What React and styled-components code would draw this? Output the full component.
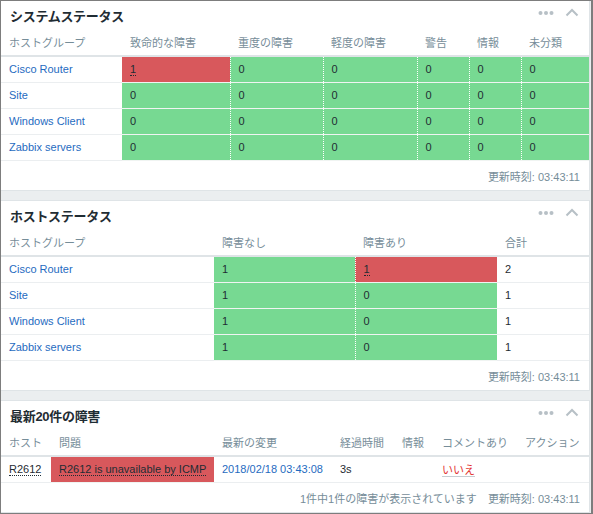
import styled, { createGlobalStyle } from "styled-components";

const GlobalStyle = createGlobalStyle`
  html, body {
    margin: 0;
    padding: 0;
    background: #fff;
  }
  body {
    font-family: "Liberation Sans", Arial, "Noto Sans CJK JP", sans-serif;
    font-size: 11px;
    color: #1f2c33;
  }
`;

const GREEN = "#77d992";
const RED = "#d8585c";

const systemRows = [
  { group: "Cisco Router", counts: [1, 0, 0, 0, 0, 0] },
  { group: "Site", counts: [0, 0, 0, 0, 0, 0] },
  { group: "Windows Client", counts: [0, 0, 0, 0, 0, 0] },
  { group: "Zabbix servers", counts: [0, 0, 0, 0, 0, 0] },
];

const hostRows = [
  { group: "Cisco Router", ok: 1, bad: 1, total: 2 },
  { group: "Site", ok: 1, bad: 0, total: 1 },
  { group: "Windows Client", ok: 1, bad: 0, total: 1 },
  { group: "Zabbix servers", ok: 1, bad: 0, total: 1 },
];

export default function App() {
  return (
    <>
      <GlobalStyle />
      <Frame>
        <Panel $first>
          <PanelHead>
            <Title>システムステータス</Title>
            <HeadIcons />
          </PanelHead>
          <Table>
            <colgroup>
              <Col $w={121} />
              <Col $w={108} />
              <Col $w={93} />
              <Col $w={94} />
              <Col $w={52} />
              <Col $w={52} />
              <Col />
            </colgroup>
            <thead>
              <tr>
                <Th>ホストグループ</Th>
                <Th>致命的な障害</Th>
                <Th>重度の障害</Th>
                <Th>軽度の障害</Th>
                <Th>警告</Th>
                <Th>情報</Th>
                <Th>未分類</Th>
              </tr>
            </thead>
            <tbody>
              {systemRows.map((row) => (
                <tr key={row.group}>
                  <Td><Link>{row.group}</Link></Td>
                  {row.counts.map((c, i) => (
                    <StatusCell key={i} $bg={c > 0 ? RED : GREEN} $sep={i > 0}>
                      {c > 0 ? <Hint>{c}</Hint> : c}
                    </StatusCell>
                  ))}
                </tr>
              ))}
            </tbody>
          </Table>
          <Footer>更新時刻: 03:43:11</Footer>
        </Panel>

        <Panel>
          <PanelHead>
            <Title>ホストステータス</Title>
            <HeadIcons />
          </PanelHead>
          <Table>
            <colgroup>
              <Col $w={213} />
              <Col $w={141} />
              <Col $w={142} />
              <Col />
            </colgroup>
            <thead>
              <tr>
                <Th>ホストグループ</Th>
                <Th>障害なし</Th>
                <Th>障害あり</Th>
                <Th>合計</Th>
              </tr>
            </thead>
            <tbody>
              {hostRows.map((row) => (
                <tr key={row.group}>
                  <Td><Link>{row.group}</Link></Td>
                  <StatusCell $bg={GREEN}>{row.ok}</StatusCell>
                  <StatusCell $bg={row.bad > 0 ? RED : GREEN} $sep>
                    {row.bad > 0 ? <Hint>{row.bad}</Hint> : row.bad}
                  </StatusCell>
                  <Td>{row.total}</Td>
                </tr>
              ))}
            </tbody>
          </Table>
          <Footer>更新時刻: 03:43:11</Footer>
        </Panel>

        <Panel $last>
          <PanelHead>
            <Title>最新20件の障害</Title>
            <HeadIcons />
          </PanelHead>
          <Table>
            <colgroup>
              <Col $w={50} />
              <Col $w={163} />
              <Col $w={118} />
              <Col $w={62} />
              <Col $w={40} />
              <Col $w={83} />
              <Col />
            </colgroup>
            <thead>
              <tr>
                <Th>ホスト</Th>
                <Th>問題</Th>
                <Th>最新の変更</Th>
                <Th>経過時間</Th>
                <Th>情報</Th>
                <Th>コメントあり</Th>
                <Th>アクション</Th>
              </tr>
            </thead>
            <tbody>
              <tr>
                <Td><Hint>R2612</Hint></Td>
                <StatusCell $bg={RED}><Hint>R2612 is unavailable by ICMP</Hint></StatusCell>
                <Td><Link>2018/02/18 03:43:08</Link></Td>
                <Td>3s</Td>
                <Td></Td>
                <Td><Ack>いいえ</Ack></Td>
                <Td></Td>
              </tr>
            </tbody>
          </Table>
          <Footer>
            <span>1件中1件の障害が表示されています</span>
            <span>更新時刻: 03:43:11</span>
          </Footer>
        </Panel>
      </Frame>
    </>
  );
}

function HeadIcons() {
  return (
    <Icons>
      <svg width="16" height="6" viewBox="0 0 16 6">
        <circle cx="2.5" cy="3" r="2" fill="#b7c0c6" />
        <circle cx="8" cy="3" r="2" fill="#b7c0c6" />
        <circle cx="13.5" cy="3" r="2" fill="#b7c0c6" />
      </svg>
      <svg width="14" height="9" viewBox="0 0 14 9">
        <path d="M1.5 7.5 L7 2 L12.5 7.5" fill="none" stroke="#b7c0c6" strokeWidth="2" />
      </svg>
    </Icons>
  );
}

const Frame = styled.div`
  width: 593px;
  height: 514px;
  box-sizing: border-box;
  border: 1px solid #7d7d7d;
  border-right-width: 2px;
  background: #ebeef0;
  display: flex;
  flex-direction: column;
  gap: 9px;
  overflow: hidden;
`;

const Panel = styled.section`
  background: #fff;
  border: 1px solid #dfe4e7;
  border-left: none;
  border-top-width: ${(p) => (p.$first ? "0" : "1px")};
  margin-right: 1px;
  flex: ${(p) => (p.$last ? "1 1 auto" : "0 0 auto")};
`;

const PanelHead = styled.header`
  height: 28px;
  display: flex;
  align-items: center;
  justify-content: space-between;
  padding: 0 9px 0 9px;
`;

const Title = styled.h4`
  margin: 0;
  font-size: 13px;
  font-weight: bold;
  color: #1f2c33;
  font-family: "Liberation Sans", "Noto Sans CJK JP", sans-serif;
  letter-spacing: -0.3px;
`;

const Icons = styled.div`
  display: flex;
  align-items: center;
  gap: 11px;
  margin-top: -5px;
  margin-right: 1px;
`;

const Table = styled.table`
  width: 100%;
  table-layout: fixed;
  border-collapse: collapse;
`;

const Col = styled.col`
  width: ${(p) => (p.$w ? `${p.$w}px` : "auto")};
`;

const Th = styled.th`
  height: 26px;
  padding: 0 0 0 8px;
  text-align: left;
  font-weight: normal;
  color: #768d99;
  white-space: nowrap;
  border-bottom: 2px solid #dfe4e7;
`;

const Td = styled.td`
  height: 24px;
  padding: 0 0 1px 8px;
  border-bottom: 1px solid #ebeef0;
  white-space: nowrap;
  color: #1f2c33;
`;

const StatusCell = styled(Td)`
  background: ${(p) => p.$bg};
  border-bottom-color: #f0f4f2;
  border-left: ${(p) => (p.$sep ? "1px dotted #fff" : "none")};
`;

const Link = styled.span`
  color: #1f6bbf;
`;

const Hint = styled.span`
  color: #1f2c33;
  border-bottom: 1px dotted #1f2c33;
`;

const Ack = styled.span`
  color: #e33734;
  border-bottom: 1px solid #c6cdd2;
`;

const Footer = styled.footer`
  height: 29px;
  display: flex;
  align-items: center;
  justify-content: flex-end;
  gap: 11px;
  padding-right: 9px;
  color: #768d99;
`;
